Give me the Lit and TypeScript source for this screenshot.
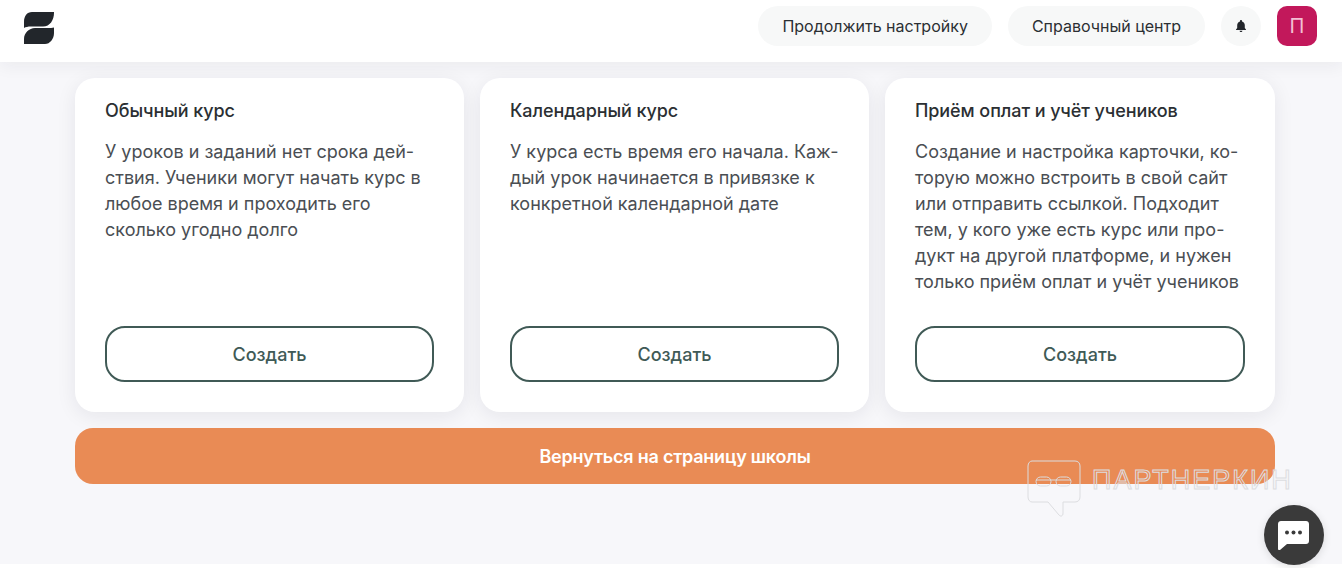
import { LitElement, html, css, svg } from "lit";
import { customElement } from "lit/decorators.js";

const cards = [
  {
    title: "Обычный курс",
    lines: [
      "У уроков и заданий нет срока дей-",
      "ствия. Ученики могут начать курс в",
      "любое время и проходить его",
      "сколько угодно долго",
    ],
  },
  {
    title: "Календарный курс",
    lines: [
      "У курса есть время его начала. Каж-",
      "дый урок начинается в привязке к",
      "конкретной календарной дате",
    ],
  },
  {
    title: "Приём оплат и учёт учеников",
    lines: [
      "Создание и настройка карточки, ко-",
      "торую можно встроить в свой сайт",
      "или отправить ссылкой. Подходит",
      "тем, у кого уже есть курс или про-",
      "дукт на другой платформе, и нужен",
      "только приём оплат и учёт учеников",
    ],
  },
];

const logo = svg`<svg class="logo" width="30" height="32" viewBox="0 0 30 32">
  <path fill="#22262b" d="M8 0H30V1C30 8 26 14.5 19 14.5H7C4 14.5 1.5 15 0 16V10C0 4 3 0 8 0Z" />
  <path fill="#22262b" d="M11 16H23C26 16 28.5 16 30 15.5V21C30 27 26 32 21 32H0V27C0 21 5 16 11 16Z" />
</svg>`;

const bell = svg`<svg width="14" height="14" viewBox="0 0 14 14">
  <path fill="#22262b" d="M7 1C7.6 1 8 1.4 8 2V2.4C9.8 2.9 10.8 4.4 10.8 6.3V9L12 10.5V11H2V10.5L3.2 9V6.3C3.2 4.4 4.2 2.9 6 2.4V2C6 1.4 6.4 1 7 1ZM5.6 11.7H8.4C8.4 12.5 7.8 13 7 13S5.6 12.5 5.6 11.7Z" />
</svg>`;

const chat = svg`<svg width="32" height="30" viewBox="0 0 32 30">
  <path fill="#fff" d="M3 1H28C29.7 1 31 2.3 31 4V21C31 22.7 29.7 24 28 24H9L2 30C1 30.4 0 30 0 29V4C0 2.3 1.3 1 3 1Z" />
  <circle cx="9" cy="12.5" r="2" fill="#3a3a3a" />
  <circle cx="15.5" cy="12.5" r="2" fill="#3a3a3a" />
  <circle cx="22" cy="12.5" r="2" fill="#3a3a3a" />
</svg>`;

const markIcon = svg`<svg width="54" height="58" viewBox="0 0 54 58" fill="none" stroke="#dcdde0" stroke-width="1">
  <path d="M5 1H48C51 1 53 3 53 6V37C53 40 51 42 48 42H36V53C36 56 34 57 32 55L21 42H5C3 42 1 40 1 37V6C1 3 3 1 5 1Z" />
  <rect x="9" y="17" width="15" height="9" rx="4.5" />
  <rect x="29" y="17" width="15" height="9" rx="4.5" />
  <path d="M9 20H44" />
</svg>`;

@customElement("app-root")
export class AppRoot extends LitElement {
  static styles = css`
    :host {
      display: block;
      position: relative;
      height: 568px;
      overflow: hidden;
      background: #fff;
      font-family: "Inter", "Noto Sans", sans-serif;
      color: #2b2f33;
    }

    .page {
      height: 564px;
      background: #f7f7fa;
    }

    header {
      height: 62px;
      background: #fff;
      box-shadow: 0 4px 16px rgba(30, 30, 50, 0.06);
      display: flex;
      align-items: center;
      justify-content: space-between;
      padding: 0 25px 0 24px;
      position: relative;
    }

    .logo {
      display: block;
      margin-top: -6px;
    }

    .actions {
      display: flex;
      align-items: center;
      gap: 16px;
      margin-top: -10px;
    }

    .pill {
      height: 40px;
      padding: 0 24px;
      border-radius: 20px;
      background: #f7f8f8;
      display: flex;
      align-items: center;
      font-size: 16px;
      font-weight: 400;
      color: #2b2f33;
    }

    .round {
      width: 40px;
      padding: 0;
      justify-content: center;
    }

    .avatar {
      width: 40px;
      height: 40px;
      border-radius: 10px;
      background: #c2185b;
      color: #f3bfd3;
      display: flex;
      align-items: center;
      justify-content: center;
      font-size: 20px;
    }

    main {
      width: 1200px;
      margin-left: 75px;
      padding-top: 16px;
      display: flex;
      flex-direction: column;
      gap: 16px;
    }

    .cards {
      display: grid;
      grid-template-columns: 389px 389px 390px;
      gap: 16px;
    }

    .card {
      height: 334px;
      box-sizing: border-box;
      padding: 22px 30px 30px;
      background: #fff;
      border-radius: 20px;
      box-shadow: 0 4px 20px rgba(30, 30, 50, 0.08);
      display: flex;
      flex-direction: column;
    }

    h3 {
      margin: 0 0 17px;
      font-size: 18px;
      line-height: 22px;
      font-weight: 500;
      letter-spacing: -0.08px;
      color: #2b2f33;
    }

    p {
      margin: 0;
      font-size: 18px;
      line-height: 26px;
      color: #4a4e53;
      white-space: nowrap;
    }

    .create {
      margin-top: auto;
      height: 56px;
      box-sizing: border-box;
      border: 2px solid #405a56;
      border-radius: 20px;
      background: #fff;
      color: #405a56;
      font: 500 18px "Inter", "Noto Sans", sans-serif;
    }

    .back {
      height: 56px;
      border: 0;
      border-radius: 18px;
      background: #e98b55;
      color: #fff;
      font: 600 18px "Inter", "Noto Sans", sans-serif;
      letter-spacing: -0.22px;
    }

    .watermark {
      position: absolute;
      left: 1027px;
      top: 460px;
      display: flex;
      gap: 11px;
      pointer-events: none;
    }

    .watermark span {
      font: 400 27px/40px "Liberation Sans", sans-serif;
      letter-spacing: 2px;
      color: transparent;
      -webkit-text-stroke: 1px #dcdde0;
    }

    .chat {
      position: absolute;
      left: 1264px;
      top: 505px;
      width: 60px;
      height: 60px;
      border-radius: 50%;
      background: #3a3a3a;
      box-shadow: 0 2px 8px rgba(0, 0, 0, 0.12);
      display: flex;
      align-items: center;
      justify-content: center;
    }
  `;

  render() {
    return html`
      <div class="page">
        <header>
          ${logo}
          <div class="actions">
            <div class="pill">Продолжить настройку</div>
            <div class="pill">Справочный центр</div>
            <div class="pill round">${bell}</div>
            <div class="avatar">П</div>
          </div>
        </header>
        <main>
          <div class="cards">
            ${cards.map(
              (c) => html`
                <div class="card">
                  <h3>${c.title}</h3>
                  <p>${c.lines.map((l) => html`${l}<br />`)}</p>
                  <button class="create">Создать</button>
                </div>
              `,
            )}
          </div>
          <button class="back">Вернуться на страницу школы</button>
        </main>
      </div>
      <div class="watermark">${markIcon}<span>ПАРТНЕРКИН</span></div>
      <div class="chat">${chat}</div>
    `;
  }
}

declare global {
  interface HTMLElementTagNameMap {
    "app-root": AppRoot;
  }
}
